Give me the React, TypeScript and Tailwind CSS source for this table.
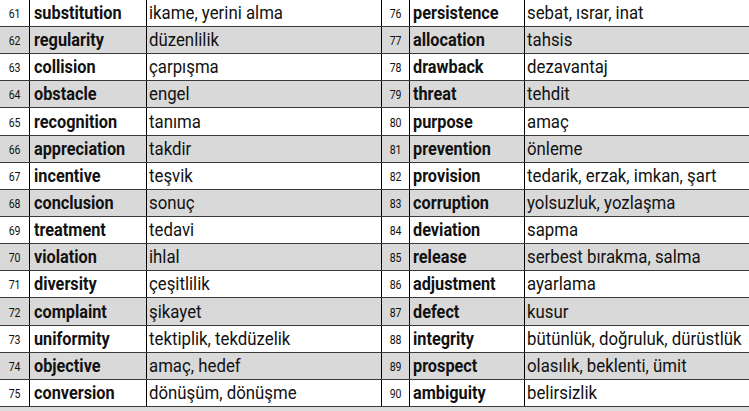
import React from "react";

const left: [number, string, string][] = [
  [61, "substitution", "ikame, yerini alma"],
  [62, "regularity", "düzenlilik"],
  [63, "collision", "çarpışma"],
  [64, "obstacle", "engel"],
  [65, "recognition", "tanıma"],
  [66, "appreciation", "takdir"],
  [67, "incentive", "teşvik"],
  [68, "conclusion", "sonuç"],
  [69, "treatment", "tedavi"],
  [70, "violation", "ihlal"],
  [71, "diversity", "çeşitlilik"],
  [72, "complaint", "şikayet"],
  [73, "uniformity", "tektiplik, tekdüzelik"],
  [74, "objective", "amaç, hedef"],
  [75, "conversion", "dönüşüm, dönüşme"],
];
const right: [number, string, string][] = [
  [76, "persistence", "sebat, ısrar, inat"],
  [77, "allocation", "tahsis"],
  [78, "drawback", "dezavantaj"],
  [79, "threat", "tehdit"],
  [80, "purpose", "amaç"],
  [81, "prevention", "önleme"],
  [82, "provision", "tedarik, erzak, imkan, şart"],
  [83, "corruption", "yolsuzluk, yozlaşma"],
  [84, "deviation", "sapma"],
  [85, "release", "serbest bırakma, salma"],
  [86, "adjustment", "ayarlama"],
  [87, "defect", "kusur"],
  [88, "integrity", "bütünlük, doğruluk, dürüstlük"],
  [89, "prospect", "olasılık, beklenti, ümit"],
  [90, "ambiguity", "belirsizlik"],
];

function Num({ n }: { n: number }) {
  return (
    <span className="inline-block text-[13.5px] scale-x-[0.78] origin-center whitespace-nowrap">
      {n}
    </span>
  );
}

function Word({ t }: { t: string }) {
  return (
    <span className="inline-block font-bold text-[17.5px] scale-x-[0.93] origin-left whitespace-nowrap">
      {t}
    </span>
  );
}

function Mean({ t }: { t: string }) {
  return (
    <span className="inline-block text-[17.5px] scale-x-[0.96] origin-left whitespace-nowrap">
      {t}
    </span>
  );
}

export default function App() {
  return (
    <div
      className="w-[749px] h-[411px] bg-[#dcdcdc] overflow-hidden text-[#111]"
      style={{ fontFamily: "Roboto, 'Noto Sans', sans-serif" }}
    >
      {left.map((l, i) => {
        const r = right[i];
        const bg = i % 2 === 0 ? "bg-white" : "bg-[#d9d9d9]";
        const h = i === 4 || i === 11 ? "h-[28px]" : "h-[27px]";
        return (
          <div
            key={i}
            className={`flex ${h} border-b border-[#3a3a3a] ${bg}`}
          >
            <div className="w-[30px] shrink-0 border-r border-black flex items-center justify-center pt-[1px]">
              <Num n={l[0]} />
            </div>
            <div className="w-[117px] shrink-0 border-r border-black flex items-center pl-[4px] pt-[1px] overflow-hidden">
              <Word t={l[1]} />
            </div>
            <div className="w-[235px] shrink-0 border-r border-black flex items-center pl-[2px] pt-[1px] overflow-hidden">
              <Mean t={l[2]} />
            </div>
            <div className="w-[28px] shrink-0 border-r border-black flex items-center justify-center pt-[1px]">
              <Num n={r[0]} />
            </div>
            <div className="w-[115px] shrink-0 border-r border-black flex items-center pl-[3px] pt-[1px] overflow-hidden">
              <Word t={r[1]} />
            </div>
            <div className="w-[224px] shrink-0 flex items-center pl-[2px] pt-[1px] overflow-hidden">
              <Mean t={r[2]} />
            </div>
          </div>
        );
      })}
    </div>
  );
}
